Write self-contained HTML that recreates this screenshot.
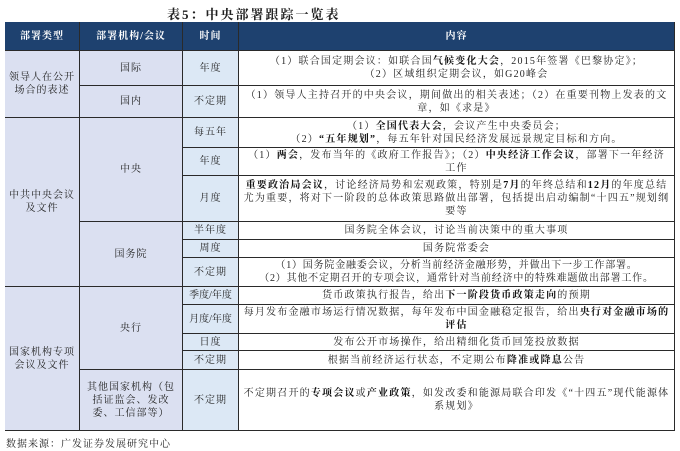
<!DOCTYPE html>
<html><head><meta charset="utf-8"><style>
body{margin:0;width:680px;height:451px;background:#fff;position:relative;overflow:hidden;font-family:"Liberation Serif","Noto Serif CJK SC","Noto Sans CJK SC",serif;color:#222}
.c{position:absolute;box-sizing:border-box;border-right:1.5px solid #2a2a2a;border-bottom:1.5px solid #2a2a2a;display:flex;align-items:center;justify-content:center;text-align:center;font-size:10px;line-height:13px;letter-spacing:1px}
.h{background:#1e416f;color:#fff;font-weight:bold}
.a{background:#dbe0f1}
.t{background:#dce8f5}
.w{background:#fff;padding:0 4px;letter-spacing:1.2px}
b{font-weight:bold;color:#111}
</style></head><body>
<div style="position:absolute;left:167px;top:4px;font-size:13px;font-weight:bold;letter-spacing:2px">表5：中央部署跟踪一览表</div>
<div style="position:absolute;left:5px;top:22px;width:670px;height:409px;border-left:1.5px solid #2a2a2a;border-top:1.5px solid #2a2a2a;box-sizing:border-box"></div>

<div class="c h" style="left:5px;top:22px;width:75px;height:29px">部署类型</div>
<div class="c h" style="left:80px;top:22px;width:103px;height:29px">部署机构/会议</div>
<div class="c h" style="left:183px;top:22px;width:56px;height:29px">时间</div>
<div class="c h" style="left:239px;top:22px;width:436px;height:29px">内容</div>

<div class="c a" style="left:5px;top:51px;width:75px;height:67px">领导人在公开<br>场合的表述</div>
<div class="c a" style="left:80px;top:51px;width:103px;height:35px">国际</div>
<div class="c t" style="left:183px;top:51px;width:56px;height:35px">年度</div>
<div class="c w" style="left:239px;top:51px;width:436px;height:35px"><span>（1）联合国定期会议：如联合国<b>气候变化大会</b>，2015年签署《巴黎协定》；<br>（2）区域组织定期会议，如G20峰会</span></div>
<div class="c a" style="left:80px;top:86px;width:103px;height:32px">国内</div>
<div class="c t" style="left:183px;top:86px;width:56px;height:32px">不定期</div>
<div class="c w" style="left:239px;top:86px;width:436px;height:32px"><span>（1）领导人主持召开的中央会议，期间做出的相关表述；（2）在重要刊物上发表的文章，如《求是》</span></div>

<div class="c a" style="left:5px;top:118px;width:75px;height:169px">中共中央会议<br>及文件</div>
<div class="c a" style="left:80px;top:118px;width:103px;height:104px">中央</div>
<div class="c t" style="left:183px;top:118px;width:56px;height:30px">每五年</div>
<div class="c w" style="left:239px;top:118px;width:436px;height:30px"><span>（1）<b>全国代表大会</b>，会议产生中央委员会；<br>（2）<b>“五年规划”</b>，每五年针对国民经济发展远景规定目标和方向。</span></div>
<div class="c t" style="left:183px;top:148px;width:56px;height:28px">年度</div>
<div class="c w" style="left:239px;top:148px;width:436px;height:28px"><span>（1）<b>两会</b>，发布当年的《政府工作报告》；（2）<b>中央经济工作会议</b>，部署下一年经济工作</span></div>
<div class="c t" style="left:183px;top:176px;width:56px;height:46px">月度</div>
<div class="c w" style="left:239px;top:176px;width:436px;height:46px"><span><b>重要政治局会议</b>，讨论经济局势和宏观政策，特别是<b>7月</b>的年终总结和<b>12月</b>的年度总结尤为重要，将对下一阶段的总体政策思路做出部署，包括提出启动编制“十四五”规划纲要等</span></div>
<div class="c a" style="left:80px;top:222px;width:103px;height:65px">国务院</div>
<div class="c t" style="left:183px;top:222px;width:56px;height:18px">半年度</div>
<div class="c w" style="left:239px;top:222px;width:436px;height:18px"><span>国务院全体会议，讨论当前决策中的重大事项</span></div>
<div class="c t" style="left:183px;top:240px;width:56px;height:18px">周度</div>
<div class="c w" style="left:239px;top:240px;width:436px;height:18px"><span>国务院常委会</span></div>
<div class="c t" style="left:183px;top:258px;width:56px;height:29px">不定期</div>
<div class="c w" style="left:239px;top:258px;width:436px;height:29px;letter-spacing:0.8px"><span>（1）国务院金融委会议，分析当前经济金融形势，并做出下一步工作部署。<br>（2）其他不定期召开的专项会议，通常针对当前经济中的特殊难题做出部署工作。</span></div>

<div class="c a" style="left:5px;top:287px;width:75px;height:144px">国家机构专项<br>会议及文件</div>
<div class="c a" style="left:80px;top:287px;width:103px;height:83px">央行</div>
<div class="c t" style="left:183px;top:287px;width:56px;height:18px;letter-spacing:0">季度/年度</div>
<div class="c w" style="left:239px;top:287px;width:436px;height:18px"><span>货币政策执行报告，给出<b>下一阶段货币政策走向</b>的预期</span></div>
<div class="c t" style="left:183px;top:305px;width:56px;height:29px;letter-spacing:0">月度/年度</div>
<div class="c w" style="left:239px;top:305px;width:436px;height:29px"><span>每月发布金融市场运行情况数据，每年发布中国金融稳定报告，给出<b>央行对金融市场的评估</b></span></div>
<div class="c t" style="left:183px;top:334px;width:56px;height:17px">日度</div>
<div class="c w" style="left:239px;top:334px;width:436px;height:17px"><span>发布公开市场操作，给出精细化货币回笼投放数据</span></div>
<div class="c t" style="left:183px;top:351px;width:56px;height:19px">不定期</div>
<div class="c w" style="left:239px;top:351px;width:436px;height:19px"><span>根据当前经济运行状态，不定期公布<b>降准或降息</b>公告</span></div>
<div class="c a" style="left:80px;top:370px;width:103px;height:61px;padding:0 4px">其他国家机构（包括证监会、发改委、工信部等）</div>
<div class="c t" style="left:183px;top:370px;width:56px;height:61px">不定期</div>
<div class="c w" style="left:239px;top:370px;width:436px;height:61px"><span>不定期召开的<b>专项会议</b>或<b>产业政策</b>，如发改委和能源局联合印发《“十四五”现代能源体系规划》</span></div>

<div style="position:absolute;left:6px;top:435px;font-size:10px;letter-spacing:1px">数据来源：广发证券发展研究中心</div>
</body></html>
